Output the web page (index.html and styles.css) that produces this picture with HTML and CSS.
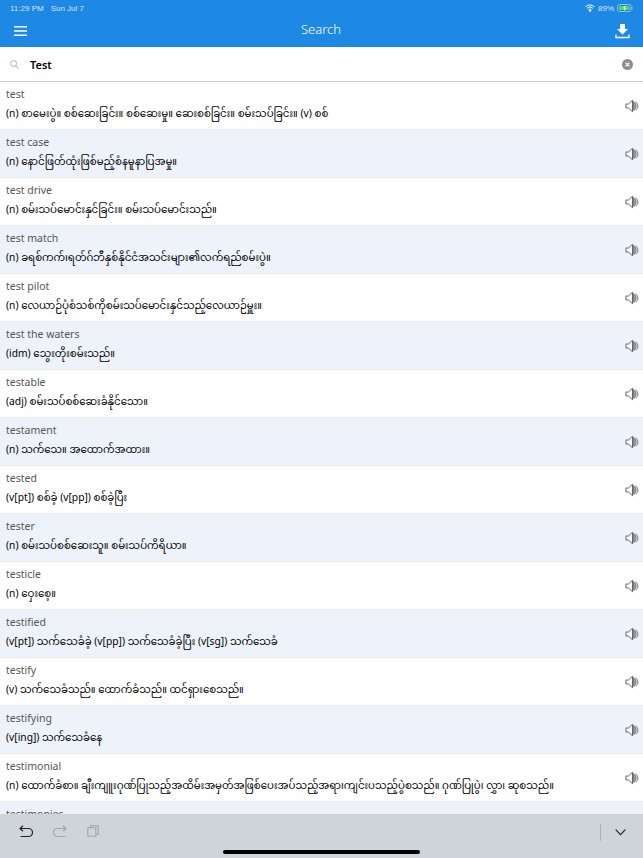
FILE: index.html
```html
<!DOCTYPE html>
<html lang="my">
<head>
    <meta charset="UTF-8">
    <meta name="viewport" content="width=device-width, initial-scale=1.0">
    <title>Search</title>
    <link rel="stylesheet" href="styles.css">
</head>
<body>
    <svg class="defs" width="0" height="0">
        <symbol id="speaker" viewBox="0 0 14 14">
            <path d="M1 5h2.500L7.500 1.200v11.600L3.500 9H1z" fill="#fff" stroke="#666" stroke-width="1"/>
            <path d="M8.500 2.500c3.500 1 3.500 8 0 9z" fill="#999" stroke="#666" stroke-width=".7"/>
            <path d="M10.800 2.800c2.800 2 2.800 6.400 0 8.400" fill="none" stroke="#777" stroke-width="1"/>
        </symbol>
    </svg>

    <header class="header">
        <div class="status">
            <span class="status-time">11:29 PM</span>
            <span>Sun Jul 7</span>
            <span class="status-right">
                <svg width="10" height="8" viewBox="0 0 10 8">
                    <path d="M.5 2.800a6.500 6.500 0 0 1 9 0M2 4.300a4.300 4.300 0 0 1 6 0M3.500 5.800a2.200 2.200 0 0 1 3 0" fill="none" stroke="#fff" stroke-width="1"/>
                    <circle cx="5" cy="7" r=".9" fill="#fff"/>
                </svg>
                <span>89%</span>
                <svg width="16" height="8" viewBox="0 0 16 8">
                    <rect x=".5" y=".5" width="13.500" height="7" rx="2" fill="none" stroke="#8fc0ef"/>
                    <rect x="2" y="2" width="10.500" height="4" fill="#4cd964"/>
                    <path d="M15 2.500v3" stroke="#8fc0ef"/>
                    <path d="M8.500 1L6 4.300h1.500L7 7l2.500-3.300H8z" fill="#fff"/>
                </svg>
            </span>
        </div>
        <div class="navbar">
            <button class="nav-btn" aria-label="Menu">
                <svg width="13" height="10" viewBox="0 0 13 10">
                    <path d="M0 .75h13M0 5h13M0 9.250h13" stroke="#fff" stroke-width="1.300"/>
                </svg>
            </button>
            <h1>Search</h1>
            <button class="nav-btn" aria-label="Download">
                <svg width="15" height="15" viewBox="0 0 15 15">
                    <path d="M5 0h5v5h3L7.500 10.500 2 5h3z" fill="#fff"/>
                    <path d="M1 10.500v3h13v-3" fill="none" stroke="#fff" stroke-width="1.300"/>
                </svg>
            </button>
        </div>
    </header>

    <div class="search">
        <svg class="search-icon" width="9" height="9" viewBox="0 0 9 9">
            <circle cx="3.600" cy="3.600" r="3" fill="none" stroke="#aaa" stroke-width=".9"/>
            <path d="M5.800 5.800L8.700 8.700" stroke="#aaa" stroke-width="1"/>
        </svg>
        <span class="search-text">Test</span>
        <svg class="search-clear" width="11" height="11" viewBox="0 0 11 11">
            <circle cx="5.500" cy="5.500" r="5.500" fill="#8e8e8e"/>
            <path d="M3.600 3.600l3.800 3.800M7.400 3.600l-3.800 3.800" stroke="#fff" stroke-width="1.200"/>
        </svg>
    </div>

    <ul class="results">
        <li class="row">
            <div><div class="word">test</div><div class="meaning">(n) စာမေးပွဲ။ စစ်ဆေးခြင်း။ စစ်ဆေးမှု။ ဆေးစစ်ခြင်း။ စမ်းသပ်ခြင်း။ (v) စစ်</div></div>
            <svg class="speaker"><use href="#speaker"/></svg>
        </li>
        <li class="row">
            <div><div class="word">test case</div><div class="meaning">(n) နောင်ဖြတ်ထုံးဖြစ်မည့်စံနမူနာပြအမှု။</div></div>
            <svg class="speaker"><use href="#speaker"/></svg>
        </li>
        <li class="row">
            <div><div class="word">test drive</div><div class="meaning">(n) စမ်းသပ်မောင်းနှင်ခြင်း။ စမ်းသပ်မောင်းသည်။</div></div>
            <svg class="speaker"><use href="#speaker"/></svg>
        </li>
        <li class="row">
            <div><div class="word">test match</div><div class="meaning">(n) ခရစ်ကက်၊ရတ်ဂ်ဘီနှစ်နိုင်ငံအသင်းများ၏လက်ရည်စမ်းပွဲ။</div></div>
            <svg class="speaker"><use href="#speaker"/></svg>
        </li>
        <li class="row">
            <div><div class="word">test pilot</div><div class="meaning">(n) လေယာဉ်ပုံစံသစ်ကိုစမ်းသပ်မောင်းနှင်သည့်လေယာဉ်မှူး။</div></div>
            <svg class="speaker"><use href="#speaker"/></svg>
        </li>
        <li class="row">
            <div><div class="word">test the waters</div><div class="meaning">(idm) သွေးတိုးစမ်းသည်။</div></div>
            <svg class="speaker"><use href="#speaker"/></svg>
        </li>
        <li class="row">
            <div><div class="word">testable</div><div class="meaning">(adj) စမ်းသပ်စစ်ဆေးခံနိုင်သော။</div></div>
            <svg class="speaker"><use href="#speaker"/></svg>
        </li>
        <li class="row">
            <div><div class="word">testament</div><div class="meaning">(n) သက်သေ။ အထောက်အထား။</div></div>
            <svg class="speaker"><use href="#speaker"/></svg>
        </li>
        <li class="row">
            <div><div class="word">tested</div><div class="meaning">(v[pt]) စစ်ခဲ့ (v[pp]) စစ်ခဲ့ပြီး</div></div>
            <svg class="speaker"><use href="#speaker"/></svg>
        </li>
        <li class="row">
            <div><div class="word">tester</div><div class="meaning">(n) စမ်းသပ်စစ်ဆေးသူ။ စမ်းသပ်ကိရိယာ။</div></div>
            <svg class="speaker"><use href="#speaker"/></svg>
        </li>
        <li class="row">
            <div><div class="word">testicle</div><div class="meaning">(n) ဝှေးစေ့။</div></div>
            <svg class="speaker"><use href="#speaker"/></svg>
        </li>
        <li class="row">
            <div><div class="word">testified</div><div class="meaning">(v[pt]) သက်သေခံခဲ့ (v[pp]) သက်သေခံခဲ့ပြီး (v[sg]) သက်သေခံ</div></div>
            <svg class="speaker"><use href="#speaker"/></svg>
        </li>
        <li class="row">
            <div><div class="word">testify</div><div class="meaning">(v) သက်သေခံသည်။ ထောက်ခံသည်။ ထင်ရှားစေသည်။</div></div>
            <svg class="speaker"><use href="#speaker"/></svg>
        </li>
        <li class="row">
            <div><div class="word">testifying</div><div class="meaning">(v[ing]) သက်သေခံနေ</div></div>
            <svg class="speaker"><use href="#speaker"/></svg>
        </li>
        <li class="row">
            <div><div class="word">testimonial</div><div class="meaning">(n) ထောက်ခံစာ။ ချီးကျူးဂုဏ်ပြုသည့်အထိမ်းအမှတ်အဖြစ်ပေးအပ်သည့်အရာ၊ကျင်းပသည့်ပွဲစသည်။ ဂုဏ်ပြုပွဲ၊ လွှာ၊ ဆုစသည်။</div></div>
            <svg class="speaker"><use href="#speaker"/></svg>
        </li>
        <li class="row">
            <div><div class="word">testimonies</div><div class="meaning"></div></div>
            <svg class="speaker"><use href="#speaker"/></svg>
        </li>
    </ul>

    <footer class="toolbar">
        <svg class="tool" width="14" height="13" viewBox="0 0 14 13">
            <path d="M1 3.500h8.500a3.500 3.500 0 0 1 0 8H1.500M4 .8L1 3.500l3 2.700" fill="none" stroke="#222" stroke-width="1.200"/>
        </svg>
        <svg class="tool" width="14" height="13" viewBox="0 0 14 13">
            <path d="M13 3.500H4.500a3.500 3.500 0 0 0 0 8h8M10 .8l3 2.700-3 2.700" fill="none" stroke="#a2a5ab" stroke-width="1.200"/>
        </svg>
        <svg class="tool" width="12" height="12" viewBox="0 0 12 12">
            <path d="M3.500 2.500V.8h7.700v8.500H9M.8 2.800h8v8.500H.8z" fill="none" stroke="#a2a5ab" stroke-width="1.100"/>
        </svg>
        <span class="toolbar-divider"></span>
        <svg class="toolbar-close" width="11" height="7" viewBox="0 0 11 7">
            <path d="M.7.7l4.800 5 4.800-5" fill="none" stroke="#222" stroke-width="1.200"/>
        </svg>
        <span class="home-bar"></span>
    </footer>
</body>
</html>
```

FILE: styles.css
```css
* {
    box-sizing: border-box;
}
html, body {
    height: 100%;
}
body {
    margin: 0;
    display: flex;
    flex-direction: column;
    overflow: hidden;
    background: #fff;
    color: #000;
    font-family: "Noto Sans", "Noto Sans Myanmar", "Open Sans", sans-serif;
}
.defs {
    position: absolute;
}

/* cabecalho azul */
.header {
    flex: none;
    height: 47px;
    background: #1e88e5;
    color: #fff;
}
.status {
    display: flex;
    align-items: center;
    height: 15px;
    padding: 1px 10px 0 10px;
    font-family: "Liberation Sans", sans-serif;
    font-size: 8px;
    color: #d3e6fa;
}
.status-time {
    margin-right: 7px;
}
.status-right {
    display: flex;
    align-items: center;
    gap: 3px;
    margin-left: auto;
}
.navbar {
    display: flex;
    align-items: center;
    justify-content: space-between;
    height: 32px;
    padding: 0 13px 0 14px;
}
.navbar h1 {
    margin: 0 0 4px;
    font-size: 13px;
    font-weight: 300;
}
.nav-btn {
    display: flex;
    padding: 0;
    border: 0;
    background: none;
}

/* busca */
.search {
    flex: none;
    display: flex;
    align-items: center;
    height: 35px;
    padding: 0 10px;
    border-bottom: 1px solid #ccc;
}
.search-icon {
    margin-right: 11px;
}
.search-text {
    font-size: 11px;
    font-weight: 600;
}
.search-clear {
    margin-left: auto;
}

/* lista */
.results {
    flex: 1;
    min-height: 0;
    margin: 0;
    padding: 0;
    overflow: hidden;
    list-style: none;
}
.row {
    display: flex;
    align-items: center;
    justify-content: space-between;
    height: 48px;
    padding: 0 4px 2px 6px;
    border-bottom: 1px solid #e8e9ee;
}
.row:nth-child(even) {
    background: #eef3fb;
}
.word {
    height: 17px;
    font-size: 10.500px;
    line-height: 14px;
    color: #555;
}
.meaning {
    height: 18px;
    font-size: 10.250px;
    line-height: 18px;
    white-space: nowrap;
}
.speaker {
    flex: none;
    width: 14px;
    height: 14px;
    margin-top: 2px;
}

/* barra inferior */
.toolbar {
    position: relative;
    flex: none;
    display: flex;
    align-items: flex-start;
    height: 44px;
    padding: 11px 0 0 19px;
    background: #cfd3da;
}
.tool {
    margin-right: 20px;
}
.toolbar-divider {
    width: 1px;
    height: 17px;
    margin-left: auto;
    margin-top: -1px;
    background: #aeb1b7;
}
.toolbar-close {
    margin: 4px 17px 0 14px;
}
.home-bar {
    position: absolute;
    left: 223px;
    bottom: 4px;
    width: 197px;
    height: 4px;
    border-radius: 2px;
    background: #000;
}
```
